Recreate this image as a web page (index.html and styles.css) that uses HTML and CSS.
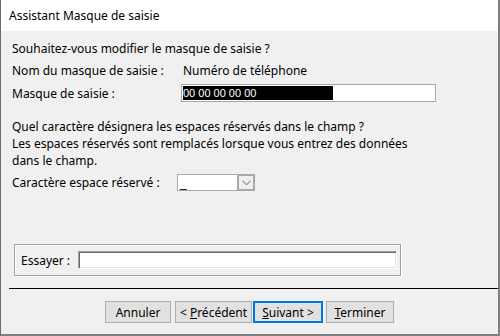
FILE: index.html
```html
<!DOCTYPE html>
<html>
<head>
<meta charset="utf-8">
<link rel="stylesheet" href="styles.css">
</head>
<body>
<div class="window">
  <div class="titlebar">Assistant Masque de saisie</div>
  <div class="content">
    <div class="row q1">Souhaitez-vous modifier le masque de saisie ?</div>
    <div class="row r-nom"><span class="label l-nom">Nom du masque de saisie :</span><span class="value">Numéro de téléphone</span></div>
    <div class="row r-mask"><span class="label l-mask">Masque de saisie :</span><span class="maskbox"><span class="sel">00 00 00 00 00</span></span></div>
    <div class="row q2">Quel caractère désignera les espaces réservés dans le champ ?</div>
    <div class="desc"><div class="dline">Les espaces réservés sont remplacés lorsque vous entrez des données</div><div class="dline">dans le champ.</div></div>
    <div class="row r-combo"><span class="label l-combo">Caractère espace réservé :</span><span class="combo"><span class="combo-text">_</span><span class="combo-btn"><svg width="9" height="6" viewBox="0 0 9 6"><path d="M0.5 0.8 L4.5 4.8 L8.5 0.8" fill="none" stroke="#5f5f5f" stroke-width="1"/></svg></span></span></div>
    <div class="group"><span class="g-label">Essayer :</span><span class="tryinput"></span></div>
  </div>
  <div class="separator"></div>
  <div class="buttons">
    <button class="btn b-annuler"><span>Annuler</span></button>
    <button class="btn b-prec"><span>&lt; <u>P</u>récédent</span></button>
    <button class="btn b-suiv default"><span><u>S</u>uivant &gt;</span></button>
    <button class="btn b-term"><span><u>T</u>erminer</span></button>
  </div>
</div>
</body>
</html>
```

FILE: styles.css
```css
html, body {
  margin: 0;
  padding: 0;
  background: #f0f0f0;
}
body {
  font-family: "Noto Sans", "Open Sans", sans-serif;
  font-size: 12px;
  color: #000;
}
.window {
  width: 500px;
  height: 336px;
  box-sizing: border-box;
  border-left: 1px solid #6b6b6b;
  border-right: 2px solid #7f7f7f;
  border-bottom: 2px solid #7f7f7f;
  background: #f0f0f0;
  display: flex;
  flex-direction: column;
  overflow: hidden;
}
.titlebar {
  height: 31px;
  flex: none;
  background: #fff;
  padding-left: 8px;
  display: flex;
  align-items: center;
  font-size: 12px;
}
.content {
  padding: 9px 0 0 11px;
  display: flex;
  flex-direction: column;
  height: 245px;
  box-sizing: border-box;
  flex: none;
}
.row {
  display: flex;
  align-items: center;
  white-space: nowrap;
}
.q1 { height: 16px; }
.r-nom { height: 16px; margin-top: 6px; }
.r-mask { height: 18px; margin-top: 6px; }
.q2 { height: 16px; margin-top: 16px; }
.desc {
  margin-top: 2px;
  white-space: nowrap;
  display: flex;
  flex-direction: column;
}
.dline {
  height: 16.5px;
  line-height: 16.5px;
  display: flex;
  align-items: center;
}
.r-combo { height: 17px; margin-top: 5px; }
.label { flex: none; }
.l-nom { width: 171px; }
.l-mask { width: 169px; }
.l-combo { width: 165px; }
.maskbox {
  width: 255px;
  height: 18px;
  box-sizing: border-box;
  border: 1px solid #a8a8a8;
  background: #fff;
  padding: 1px;
  display: flex;
}
.sel {
  width: 150px;
  background: #000;
  color: #fff;
  font-family: "Liberation Sans", Arial, sans-serif;
  font-size: 11px;
  line-height: 14px;
}
.combo {
  width: 78px;
  height: 17px;
  box-sizing: border-box;
  border: 1px solid #a9a9a9;
  background: #fff;
  display: flex;
}
.combo-text {
  flex: 1;
  padding-left: 2px;
  line-height: 16px;
  font-family: "Liberation Sans", Arial, sans-serif;
}
.combo-btn {
  width: 16px;
  flex: none;
  background: #efefef;
  border-left: 1px solid #a9a9a9;
  box-shadow: inset 0 0 0 1px #a9a9a9;
  display: flex;
  align-items: center;
  justify-content: center;
}
.group {
  margin-top: auto;
  margin-left: 2px;
  width: 387px;
  height: 32px;
  box-sizing: border-box;
  border: 1px solid #a0a0a0;
  box-shadow: inset 1px 1px 0 #fff, 1px 1px 0 #fff;
  display: flex;
  align-items: center;
  padding-left: 6px;
}
.g-label { width: 57px; flex: none; }
.tryinput {
  width: 319px;
  height: 18px;
  box-sizing: border-box;
  background: #fff;
  border: 1px solid;
  border-color: #a0a0a0 #fff #fff #a0a0a0;
  box-shadow: inset 1px 1px 0 #696969, inset -1px -1px 0 #e3e3e3;
}
.separator {
  margin: 12px 0 0 8px;
  height: 1px;
  background: #000;
  flex: none;
}
.buttons {
  display: flex;
  gap: 3px;
  padding: 12px 0 0 104px;
}
.btn {
  height: 22px;
  box-sizing: border-box;
  border: 1px solid #adadad;
  background: #e1e1e1;
  font-family: "Noto Sans", "Open Sans", sans-serif;
  font-size: 12px;
  color: #000;
  padding: 0;
  margin: 0;
  display: flex;
  align-items: center;
  justify-content: center;
  white-space: pre;
}
.b-annuler { width: 66px; margin-right: 1px; }
.b-prec { width: 77px; margin-right: -2px; }
.b-suiv { width: 70px; }
.b-term { width: 68px; }
.default {
  border: 2px solid #0078d7;
}
```
